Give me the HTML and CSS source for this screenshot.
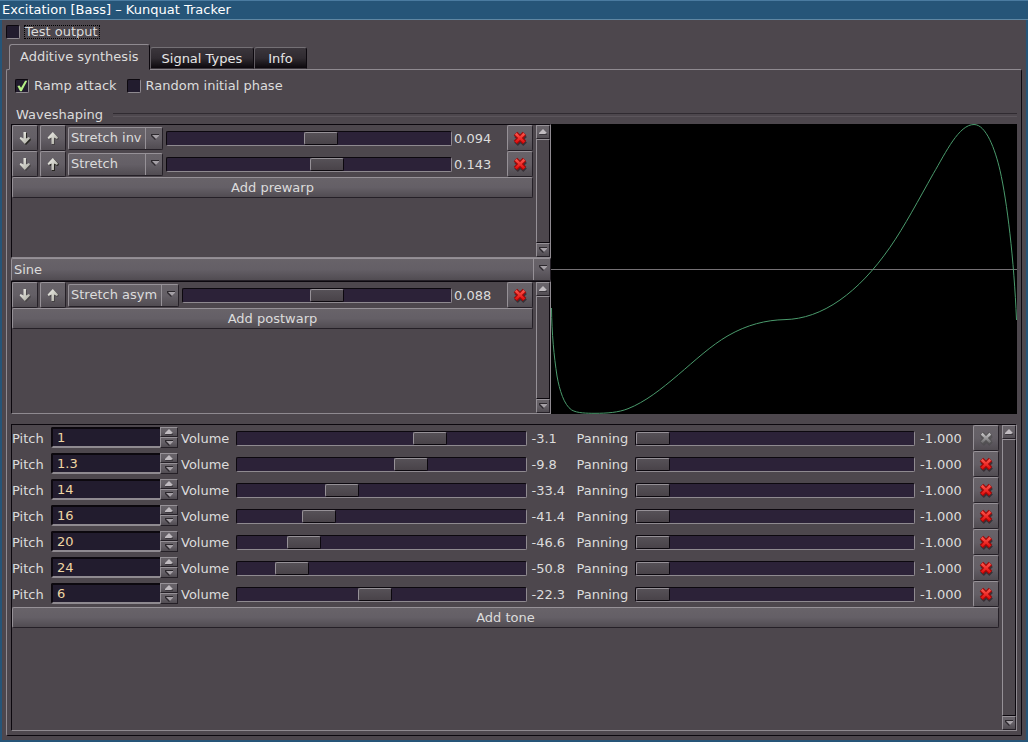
FILE: index.html
```html
<!DOCTYPE html>
<html lang="en">
<head>
<meta charset="utf-8">
<title>Excitation [Bass] – Kunquat Tracker</title>
<link rel="stylesheet" href="styles.css">
</head>
<body>
<svg class="defs" aria-hidden="true">
  <defs>
    <linearGradient id="steel" x1="0" y1="0" x2="1" y2="1"><stop offset="0" stop-color="#f4f4ee"/><stop offset="1" stop-color="#a8a89e"/></linearGradient>
    <linearGradient id="red" x1="0" y1="0" x2="0" y2="1"><stop offset="0" stop-color="#ff5a50"/><stop offset="1" stop-color="#e00808"/></linearGradient>
    <symbol id="down" viewBox="0 0 16 16">
      <path class="shade" d="M7 3h3v6l3-1 1 2-5 5-5-5 1-2 2 1z"/>
      <path fill="url(#steel)" d="M6.500 2h2.500v6.500l3-1.500 1 1.500-5.200 5.500-5.200-5.500 1-1.500 2.900 1.500z"/>
    </symbol>
    <symbol id="up" viewBox="0 0 16 16">
      <path class="shade" d="M7 15h3V9l3 1 1-2-5-5-5 5 1 2 2-1z"/>
      <path fill="url(#steel)" d="M6.500 14h2.500V7.500l3 1.500 1-1.500L7.800 2 2.600 7.500l1 1.500 2.900-1.500z"/>
    </symbol>
    <symbol id="cross" viewBox="0 0 16 16">
      <path d="M4.500 5.500l8 8M12.500 5.500l-8 8" fill="none" stroke="#282228" stroke-width="4.500" opacity=".7"/>
      <path class="rim" d="M4 4l8 8M12 4l-8 8" fill="none" stroke-width="4.400"/>
      <path class="core" d="M3.400 5L5 3.400l3 3 3-3L12.600 5l-3 3 3 3-1.600 1.600-3-3-3 3L3.400 11l3-3z"/>
    </symbol>
    <symbol id="tri-down" viewBox="0 0 10 6"><path d="M1 0h8v2L5 6 1 2z" fill="#2d292e"/><path d="M2 1h7v1L6 5z" fill="#a5a0a6"/></symbol>
    <symbol id="tri-up" viewBox="0 0 10 6"><path d="M1 6h8V4L5 1z" fill="#3c383e"/><path d="M1 5V4l4-4 4 4-2 1z" fill="#c0bbc0"/></symbol>
  </defs>
</svg>

<header class="titlebar">Excitation [Bass] – Kunquat Tracker</header>
<main class="window">
  <div class="test-row"><label class="check"><input type="checkbox"><span class="focused">Test output</span></label></div>
  <nav class="tabs">
    <button class="tab active">Additive synthesis</button><button class="tab">Signal Types</button><button class="tab">Info</button>
  </nav>
  <section class="pane">
    <div class="options">
      <label class="check"><input type="checkbox" checked><span>Ramp attack</span></label>
      <label class="check"><input type="checkbox"><span>Random initial phase</span></label>
    </div>
    <h2 class="group-title">Waveshaping</h2>
    <div class="shaping">
      <div class="shapers">
        <div class="area">
          <div class="list">
            <div class="warp">
              <button class="icon-btn" aria-label="Move down"><svg><use href="#down"/></svg></button>
              <button class="icon-btn" aria-label="Move up" disabled><svg><use href="#up"/></svg></button>
              <span class="combo"><select aria-label="Prewarp 1 type"><option>Stretch</option><option selected>Stretch inv</option></select><span class="drop"><svg><use href="#tri-down"/></svg></span></span>
              <input class="slider" type="range" min="-1" max="1" step="0.001" value="0.094" aria-label="Prewarp 1 amount">
              <output>0.094</output>
              <button class="icon-btn remove" aria-label="Remove"><svg><use href="#cross"/></svg></button>
            </div>
            <div class="warp">
              <button class="icon-btn" aria-label="Move down" disabled><svg><use href="#down"/></svg></button>
              <button class="icon-btn" aria-label="Move up"><svg><use href="#up"/></svg></button>
              <span class="combo"><select aria-label="Prewarp 2 type"><option selected>Stretch</option><option>Stretch inv</option></select><span class="drop"><svg><use href="#tri-down"/></svg></span></span>
              <input class="slider" type="range" min="-1" max="1" step="0.001" value="0.143" aria-label="Prewarp 2 amount">
              <output>0.143</output>
              <button class="icon-btn remove" aria-label="Remove"><svg><use href="#cross"/></svg></button>
            </div>
            <button class="add">Add prewarp</button>
          </div>
          <div class="scroll"><button aria-label="Scroll up"><svg><use href="#tri-up"/></svg></button><div class="thumb"></div><button aria-label="Scroll down"><svg><use href="#tri-down"/></svg></button></div>
        </div>
        <span class="combo wide"><select aria-label="Base waveform"><option>Sine</option></select><span class="drop"><svg><use href="#tri-down"/></svg></span></span>
        <div class="area">
          <div class="list">
            <div class="warp">
              <button class="icon-btn" aria-label="Move down" disabled><svg><use href="#down"/></svg></button>
              <button class="icon-btn" aria-label="Move up" disabled><svg><use href="#up"/></svg></button>
              <span class="combo"><select aria-label="Postwarp type"><option>Stretch asym</option></select><span class="drop"><svg><use href="#tri-down"/></svg></span></span>
              <input class="slider" type="range" min="-1" max="1" step="0.001" value="0.088" aria-label="Postwarp amount">
              <output>0.088</output>
              <button class="icon-btn remove" aria-label="Remove"><svg><use href="#cross"/></svg></button>
            </div>
            <button class="add">Add postwarp</button>
          </div>
          <div class="scroll"><button aria-label="Scroll up"><svg><use href="#tri-up"/></svg></button><div class="thumb"></div><button aria-label="Scroll down"><svg><use href="#tri-down"/></svg></button></div>
        </div>
      </div>
      <svg class="wave" viewBox="0 0 466 290" preserveAspectRatio="none" role="img" aria-label="Waveform">
        <path class="axis" d="M0 145.500H466"/>
        <path class="curve" d="M.5 184C.8 210 3 232 6 252C8.500 266 13 281 20.700 286C26 289.200 36 289.300 44 289.300C56 289.300 67 288.600 77 284.700C94 278 110.500 265 127.300 250.700C144 236.500 160 221.500 177 211.700C196 200.700 215 196 234 195.600C252 195.200 270.500 189 289 176C306 164 322.500 147 339 123.300C353.500 102.500 368 75 382.300 49.700C395 28 408 .5 423 .5C435 .5 444 25 449 46.300C456 77 463 135 465.500 196"/>
      </svg>
    </div>

    <div class="area tones">
      <div class="list">
        <div class="tone">
          <label for="p1">Pitch</label><span class="spin"><input id="p1" type="text" value="1"><button aria-label="Increase"><svg><use href="#tri-up"/></svg></button><button aria-label="Decrease"><svg><use href="#tri-down"/></svg></button></span>
          <label for="v1">Volume</label><input class="slider" id="v1" type="range" min="-64" max="24" step="0.1" value="-3.1"><output>-3.1</output>
          <label for="n1">Panning</label><input class="slider" id="n1" type="range" min="-1" max="1" step="0.001" value="-1"><output>-1.000</output>
          <button class="icon-btn remove" aria-label="Remove" disabled><svg><use href="#cross"/></svg></button>
        </div>
        <div class="tone">
          <label for="p2">Pitch</label><span class="spin"><input id="p2" type="text" value="1.3"><button aria-label="Increase"><svg><use href="#tri-up"/></svg></button><button aria-label="Decrease"><svg><use href="#tri-down"/></svg></button></span>
          <label for="v2">Volume</label><input class="slider" id="v2" type="range" min="-64" max="24" step="0.1" value="-9.8"><output>-9.8</output>
          <label for="n2">Panning</label><input class="slider" id="n2" type="range" min="-1" max="1" step="0.001" value="-1"><output>-1.000</output>
          <button class="icon-btn remove" aria-label="Remove"><svg><use href="#cross"/></svg></button>
        </div>
        <div class="tone">
          <label for="p3">Pitch</label><span class="spin"><input id="p3" type="text" value="14"><button aria-label="Increase"><svg><use href="#tri-up"/></svg></button><button aria-label="Decrease"><svg><use href="#tri-down"/></svg></button></span>
          <label for="v3">Volume</label><input class="slider" id="v3" type="range" min="-64" max="24" step="0.1" value="-33.4"><output>-33.4</output>
          <label for="n3">Panning</label><input class="slider" id="n3" type="range" min="-1" max="1" step="0.001" value="-1"><output>-1.000</output>
          <button class="icon-btn remove" aria-label="Remove"><svg><use href="#cross"/></svg></button>
        </div>
        <div class="tone">
          <label for="p4">Pitch</label><span class="spin"><input id="p4" type="text" value="16"><button aria-label="Increase"><svg><use href="#tri-up"/></svg></button><button aria-label="Decrease"><svg><use href="#tri-down"/></svg></button></span>
          <label for="v4">Volume</label><input class="slider" id="v4" type="range" min="-64" max="24" step="0.1" value="-41.4"><output>-41.4</output>
          <label for="n4">Panning</label><input class="slider" id="n4" type="range" min="-1" max="1" step="0.001" value="-1"><output>-1.000</output>
          <button class="icon-btn remove" aria-label="Remove"><svg><use href="#cross"/></svg></button>
        </div>
        <div class="tone">
          <label for="p5">Pitch</label><span class="spin"><input id="p5" type="text" value="20"><button aria-label="Increase"><svg><use href="#tri-up"/></svg></button><button aria-label="Decrease"><svg><use href="#tri-down"/></svg></button></span>
          <label for="v5">Volume</label><input class="slider" id="v5" type="range" min="-64" max="24" step="0.1" value="-46.6"><output>-46.6</output>
          <label for="n5">Panning</label><input class="slider" id="n5" type="range" min="-1" max="1" step="0.001" value="-1"><output>-1.000</output>
          <button class="icon-btn remove" aria-label="Remove"><svg><use href="#cross"/></svg></button>
        </div>
        <div class="tone">
          <label for="p6">Pitch</label><span class="spin"><input id="p6" type="text" value="24"><button aria-label="Increase"><svg><use href="#tri-up"/></svg></button><button aria-label="Decrease"><svg><use href="#tri-down"/></svg></button></span>
          <label for="v6">Volume</label><input class="slider" id="v6" type="range" min="-64" max="24" step="0.1" value="-50.8"><output>-50.8</output>
          <label for="n6">Panning</label><input class="slider" id="n6" type="range" min="-1" max="1" step="0.001" value="-1"><output>-1.000</output>
          <button class="icon-btn remove" aria-label="Remove"><svg><use href="#cross"/></svg></button>
        </div>
        <div class="tone">
          <label for="p7">Pitch</label><span class="spin"><input id="p7" type="text" value="6"><button aria-label="Increase"><svg><use href="#tri-up"/></svg></button><button aria-label="Decrease"><svg><use href="#tri-down"/></svg></button></span>
          <label for="v7">Volume</label><input class="slider" id="v7" type="range" min="-64" max="24" step="0.1" value="-22.3"><output>-22.3</output>
          <label for="n7">Panning</label><input class="slider" id="n7" type="range" min="-1" max="1" step="0.001" value="-1"><output>-1.000</output>
          <button class="icon-btn remove" aria-label="Remove"><svg><use href="#cross"/></svg></button>
        </div>
        <button class="add">Add tone</button>
      </div>
      <div class="scroll"><button aria-label="Scroll up"><svg><use href="#tri-up"/></svg></button><div class="thumb"></div><button aria-label="Scroll down"><svg><use href="#tri-down"/></svg></button></div>
    </div>
  </section>
</main>
</body>
</html>
```
FILE: styles.css
```css
:root {
  --bg: #4d474d;
  --light: #8f8a90;
  --dark: #0c080e;
  --edge: #252027;
  --field: #221c2e;
  --groove: #2c2238;
  --text: #dcdcdc;
  --raised: linear-gradient(#686369, #645f66 50%, #514c52);
}

* { box-sizing: border-box; }

body {
  margin: 0;
  min-height: 100vh;
  display: flex;
  flex-direction: column;
  background: #265578;
  color: var(--text);
  font: 13px/16px "DejaVu Sans", sans-serif;
}

button, input, select {
  margin: 0;
  padding: 0;
  border: 0;
  border-radius: 0;
  color: inherit;
  font: inherit;
}

svg { display: block; }
.defs { position: absolute; width: 0; height: 0; }

.titlebar {
  height: 20px;
  padding: 1px 2px;
  border-top: 1px solid #4a7ba0;
  border-bottom: 1px solid #5f87a3;
  color: #fff;
}

.window {
  flex: 1;
  display: flex;
  flex-direction: column;
  margin: 0 2px 2px;
  padding: 4px;
  background: var(--bg);
}

/* Check boxes */
.check { display: flex; align-items: center; gap: 5px; }
.check input {
  appearance: none;
  width: 14px;
  height: 14px;
  border: 1px solid;
  border-color: var(--dark) var(--light) var(--light) var(--dark);
  border-radius: 2px;
  background: var(--field);
}
.check input:checked::before {
  content: "";
  display: block;
  width: 12px;
  height: 12px;
  background: #b4ee86;
  clip-path: polygon(12% 50%, 30% 45%, 42% 65%, 76% 6%, 94% 6%, 48% 94%, 34% 94%);
}
.test-row { display: flex; height: 16px; }
.focused { line-height: 12px; padding-right: 1px; outline: 1px dotted #000; }

/* Tabs */
.tabs { display: flex; align-items: flex-end; height: 29px; padding: 0 3px; }
.tab {
  height: 22px;
  padding: 1px 11px 0;
  border: 1px solid;
  border-color: #747075 var(--dark) transparent #625d63;
  border-radius: 3px 3px 0 0;
  background: linear-gradient(#3b363c, #302b31 50%, #0c080d);
  color: #e6e6e6;
}
.tab.active {
  height: 26px;
  margin-bottom: -1px;
  padding: 0 10px;
  border-color: var(--light) var(--dark) var(--bg) var(--light);
  background: var(--bg);
  color: var(--text);
  z-index: 1;
}
.tab:last-child { padding: 1px 13px 0; }

.pane {
  flex: 1;
  display: flex;
  flex-direction: column;
  padding: 4px;
  border: 1px solid;
  border-color: var(--light) var(--dark) var(--dark) var(--light);
  border-radius: 2px;
}
.options { display: flex; gap: 10px; padding: 4px 4px 0; }
.group-title {
  display: flex;
  align-items: center;
  gap: 10px;
  margin: 13px 0 1px 5px;
  font: inherit;
}
.group-title::after {
  content: "";
  flex: 1;
  height: 2px;
  border-top: 1px solid #302b31;
  border-bottom: 1px solid #5b555b;
}

/* Wave shaping */
.shaping {
  display: grid;
  grid-template-columns: minmax(0, 540fr) minmax(0, 466fr);
  height: 290px;
}
.shapers { display: grid; grid-template-rows: 134px 23px 133px; }
.wave { width: 100%; height: 100%; background: #000; }
.axis, .curve { fill: none; stroke: #747074; stroke-width: 1; }
.curve { stroke: #4a9a6c; }

.area {
  display: flex;
  gap: 3px;
  border: 1px solid;
  border-color: var(--dark) var(--light) var(--light) var(--dark);
}
.list { flex: 1; min-width: 0; }
.tones { flex: 1; margin-top: 10px; }

.warp { display: flex; align-items: center; height: 26px; }
.warp .icon-btn:nth-child(-n+2) { width: 26px; margin-right: 2px; }
.warp .slider { flex: 1; min-width: 0; margin: 0 2px 0 3px; }
.warp output { width: 53px; padding-top: 2px; }

.icon-btn, .add, .scroll button, .spin button {
  display: flex;
  align-items: center;
  justify-content: center;
  background: var(--raised);
  border: 1px solid;
  border-color: #969197 var(--edge) var(--edge) #969197;
}
.icon-btn { --shade: 0.9; width: 26px; height: 26px; border-radius: 2px; }
.icon-btn:disabled { --shade: 0.35; }
.icon-btn svg { width: 16px; height: 16px; }
.icon-btn.remove svg { width: 18px; height: 18px; flex: none; }
.shade { fill: #20201a; opacity: var(--shade); }
.rim { stroke: #a00808; }
.core { fill: url(#red); }
.remove:disabled svg { filter: grayscale(1) brightness(2) opacity(0.7); }

.add { width: 100%; height: 21px; border-radius: 2px; color: var(--text); }

/* Drop-downs */
.combo { display: grid; height: 23px; }
.combo > * { grid-area: 1 / 1; }
.combo select {
  appearance: none;
  padding: 0 20px 1px 2px;
  border: 1px solid;
  border-color: #969197 var(--edge) var(--edge) #969197;
  border-radius: 2px;
  background: var(--raised);
}
.combo.wide select { padding-bottom: 0; }
.drop {
  justify-self: end;
  display: grid;
  place-items: center;
  width: 18px;
  margin: 1px 0;
  padding-bottom: 3px;
  border-left: 1px solid #969197;
  pointer-events: none;
}
.drop svg { width: 10px; height: 6px; }

/* Sliders */
.slider {
  appearance: none;
  height: 15px;
  border: 1px solid;
  border-color: var(--dark) var(--light) var(--light) var(--dark);
  border-radius: 2px;
  background: var(--groove);
}
.slider::-webkit-slider-thumb {
  appearance: none;
  width: 34px;
  height: 13px;
  border: 1px solid;
  border-color: #969197 var(--dark) var(--dark) #969197;
  border-radius: 2px;
  background: linear-gradient(#565157, #494349);
}

/* Scroll bars */
.scroll { display: flex; flex-direction: column; width: 14px; }
.scroll button { height: 14px; }
.scroll svg { width: 10px; height: 6px; flex: none; }
.thumb {
  flex: 1;
  border: 1px solid;
  border-color: #969197 var(--dark) var(--dark) #969197;
  background: var(--bg);
}

/* Tone rows */
.tone {
  display: grid;
  grid-template-columns: 39px 130px 55px minmax(0, 29fr) 50px 58px minmax(0, 28fr) 58px 26px;
  align-items: center;
  height: 26px;
}
.tone label { padding-top: 2px; }
.tone output { padding: 2px 0 0 5px; }
.spin {
  display: grid;
  align-self: start;
  grid-template-columns: 1fr 18px;
  grid-template-rows: 10px 11px;
  margin: 2px 3px 0 0;
}
.spin input {
  grid-row: 1 / 3;
  min-width: 0;
  padding: 1px 4px 0;
  border: 2px solid;
  border-color: var(--dark) transparent var(--light) var(--dark);
  border-right: 0;
  border-radius: 2px 0 0 2px;
  background: var(--field);
  color: #efd6a4;
}
.spin button { min-height: 0; }
.spin svg { width: 10px; height: 6px; flex: none; }
```
